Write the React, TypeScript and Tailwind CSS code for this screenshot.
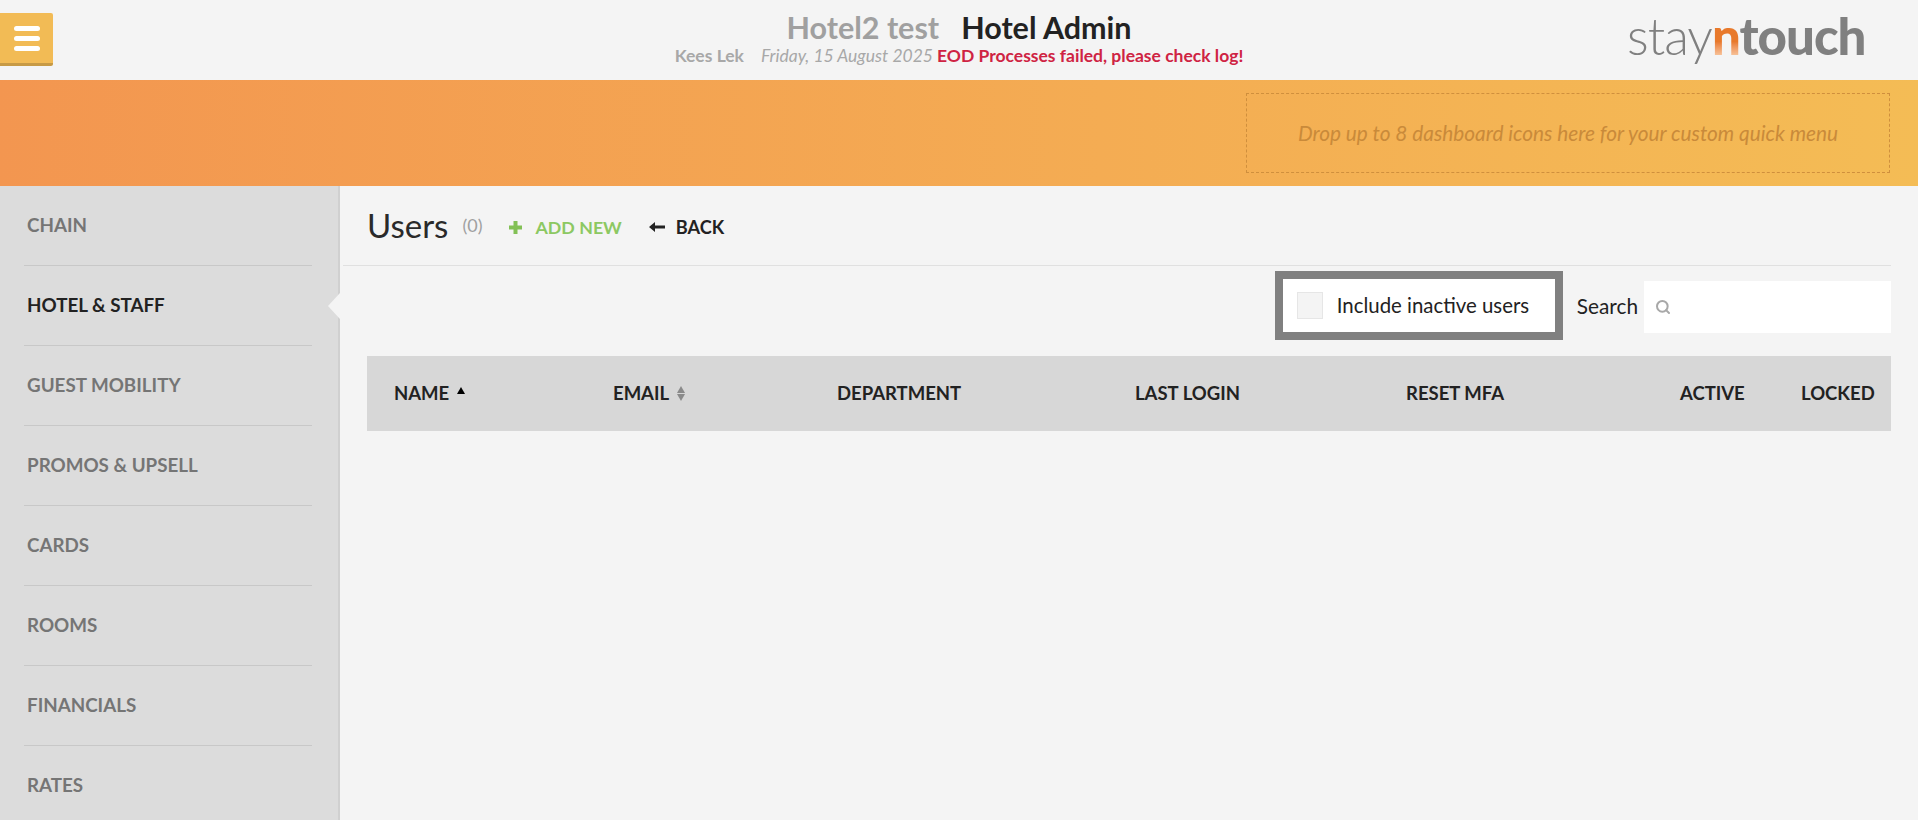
import { Search } from 'lucide-react'

const navItems = ['CHAIN', 'HOTEL & STAFF', 'GUEST MOBILITY', 'PROMOS & UPSELL', 'CARDS', 'ROOMS', 'FINANCIALS', 'RATES']

function Header() {
  return (
    <header className="h-20 grid grid-cols-[293px_1fr_293px]">
      <div>
        <button className="mt-[13px] w-[53px] h-[53px] bg-[#f2bb55] border-b-[3px] border-[#c79a45] rounded-r-[2px] flex flex-col items-center justify-center gap-[5px] pl-[1px]">
          <span className="w-[26px] h-[5px] rounded-full bg-white" />
          <span className="w-[26px] h-[5px] rounded-full bg-white" />
          <span className="w-[26px] h-[5px] rounded-full bg-white" />
        </button>
      </div>
      <div className="flex flex-col items-center pt-[9px]">
        <div className="text-[30.5px] leading-[37px] font-bold flex gap-[22px]">
          <span className="text-[#a0a0a0]">Hotel2 test</span>
          <span className="text-[#222222]">Hotel Admin</span>
        </div>
        <div className="text-[17.5px] leading-[20px] flex">
          <span className="font-bold text-[#a8a8a8] mr-[17px]">Kees Lek</span>
          <span className="italic text-[#a8a8a8] mr-[4px]">Friday, 15 August 2025</span>
          <span className="font-bold text-[#cf2343]">EOD Processes failed, please check log!</span>
        </div>
      </div>
      <div className="pt-[5px] pl-[2px] text-[51px] leading-[62px] tracking-[-1px] text-[#808080]">
        <span className="font-light">stay</span>
        <span className="font-black bg-gradient-to-b from-[#e8792b] from-60% to-[#f9d9b8] to-90% bg-clip-text text-transparent">n</span>
        <span className="font-black">touch</span>
      </div>
    </header>
  )
}

function Banner() {
  return (
    <div className="h-[106px] bg-gradient-to-r from-[#f39650] to-[#f4bc55] flex items-center justify-end pr-[28px]">
      <div className="w-[644px] h-[80px] border border-dashed border-[#cf8f3d] flex items-center justify-center italic text-[20.8px] text-[#c98a3a]">
        Drop up to 8 dashboard icons here for your custom quick menu
      </div>
    </div>
  )
}

function Sidebar() {
  return (
    <aside className="w-[340px] shrink-0 bg-[#dcdcdc] border-r-2 border-[#d0d0d0] px-6 relative">
      {navItems.map((item) => (
        <div
          key={item}
          className={`h-20 border-b border-[#c8c8c8] w-[288px] pl-[3px] flex items-center font-bold text-[18.8px] ${
            item === 'HOTEL & STAFF' ? 'text-[#222222]' : 'text-[#757575]'
          }`}
        >
          {item}
        </div>
      ))}
      <div className="absolute top-[107px] right-[-2px] w-0 h-0 border-y-[13px] border-y-transparent border-r-[12px] border-r-[#f4f4f4]" />
    </aside>
  )
}

function UsersTable() {
  return (
    <div className="ml-[27px] mr-[27px] h-[75px] bg-[#d7d7d7] grid grid-cols-[219px_224px_298px_271px_274px_121px_1fr] items-center pl-[27px] font-bold text-[18.5px] text-[#222222]">
      <div className="flex items-center gap-[8px]">
        NAME
        <span className="w-0 h-0 mb-[6px] border-x-[4px] border-x-transparent border-b-[7px] border-b-black" />
      </div>
      <div className="flex items-center gap-[8px]">
        EMAIL
        <span className="flex flex-col gap-[1px]">
          <span className="w-0 h-0 border-x-[4px] border-x-transparent border-b-[7px] border-b-[#8a8a8a]" />
          <span className="w-0 h-0 border-x-[4px] border-x-transparent border-t-[7px] border-t-[#8a8a8a]" />
        </span>
      </div>
      <div>DEPARTMENT</div>
      <div>LAST LOGIN</div>
      <div>RESET MFA</div>
      <div>ACTIVE</div>
      <div>LOCKED</div>
    </div>
  )
}

function Content() {
  return (
    <main className="flex-1 min-w-0">
      <div className="h-20 ml-[3px] mr-[27px] border-b border-[#e0e0e0] flex items-center pl-[24px]">
        <h1 className="text-[33px] text-[#2a2a2a]">Users</h1>
        <span className="ml-[14px] text-[18px] text-[#a0a0a0] mb-[1px]">(0)</span>
        {/* plus and arrow are heavier than the font's glyphs */}
        <svg width="15" height="15" viewBox="0 0 15 15" className="ml-[26px] mt-[3px]">
          <path d="M7.5 1v13M1 7.5h13" stroke="#82c055" strokeWidth="4" />
        </svg>
        <span className="ml-[12px] mt-[4px] text-[#8cc862] font-bold text-[17.8px]">ADD NEW</span>
        <svg width="16" height="12" viewBox="0 0 16 12" className="ml-[27px] mt-[3px]">
          <path d="M0 6l6-5v3.5h10v3H6V11z" fill="#222222" />
        </svg>
        <span className="ml-[11px] mt-[5px] text-[#222222] font-bold text-[18.2px]">BACK</span>
      </div>
      <div className="h-[90px] mr-[27px] flex items-start justify-end pt-[5px]">
        <label className="w-[288px] h-[69px] border-[8px] border-[#808080] bg-white flex items-center pl-[14px] text-[20.4px] text-[#222222]">
          <span className="w-[26px] h-[27px] border border-[#e6e6e6] bg-[#f4f4f4]" />
          <span className="ml-[14px]">Include inactive users</span>
        </label>
        <span className="ml-[14px] mt-[19px] text-[20.8px] text-[#222222]">Search</span>
        <div className="ml-[6px] mt-[10px] w-[247px] h-[52px] bg-white flex items-center pl-[11px]">
          <Search size={16} strokeWidth={3} color="#a8a8a8" />
        </div>
      </div>
      <UsersTable />
    </main>
  )
}

export default function App() {
  return (
    <div className="h-[820px] w-[1918px] overflow-hidden bg-[#f4f4f4] font-['Lato',sans-serif]">
      <Header />
      <Banner />
      <div className="flex h-[634px]">
        <Sidebar />
        <Content />
      </div>
    </div>
  )
}
